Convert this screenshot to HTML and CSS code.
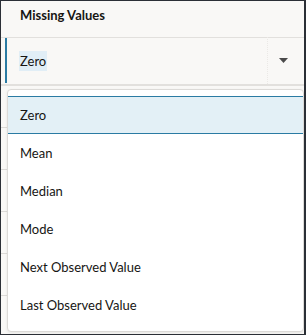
FILE: index.html
```html
<!DOCTYPE html>
<html lang="en">
<head>
    <meta charset="UTF-8">
    <meta name="viewport" content="width=device-width, initial-scale=1.0">
    <title>Missing Values</title>
    <link rel="stylesheet" href="styles.css">
</head>
<body>
    <div class="frame">
        <div class="field-label">Missing Values</div>

        <!-- Select field -->
        <div class="select-row">
            <div class="select-field">
                <span class="select-value">Zero</span>
                <span class="select-arrow">
                    <svg width="9" height="5" viewBox="0 0 9 5"><path d="M0 0h9L4.5 5z" fill="#4a4a4a"/></svg>
                </span>
            </div>
        </div>

        <!-- Table rows behind the popup -->
        <div class="rows">
            <div class="row"></div>
            <div class="row"></div>
            <div class="row"></div>
            <div class="row"></div>
            <div class="row"></div>
        </div>

        <!-- Dropdown list -->
        <ul class="dropdown">
            <li class="option selected">Zero</li>
            <li class="option">Mean</li>
            <li class="option">Median</li>
            <li class="option">Mode</li>
            <li class="option">Next Observed Value</li>
            <li class="option">Last Observed Value</li>
        </ul>
    </div>
</body>
</html>
```

FILE: styles.css
```css
/* Base */
* {
    box-sizing: border-box;
}

body {
    margin: 0;
    font-family: Lato, "Noto Sans", sans-serif;
    color: #161513;
}

.frame {
    position: relative;
    width: 306px;
    height: 335px;
    background: #f9f8f6;
    border: 1px solid #2b2f36;
    border-right-width: 2px;
    overflow: hidden;
}

/* Label */
.field-label {
    height: 37px;
    padding: 0 0 0 19px;
    border-bottom: 1px solid #e2e0dd;
    font-size: 13px;
    font-weight: bold;
    line-height: 29px;
}

/* Select */
.select-row {
    height: 48px;
    border-bottom: 2px solid #e2e0dd;
    padding-bottom: 1px;
}

.select-field {
    display: flex;
    align-items: center;
    height: 45px;
    margin-left: 4px;
    border-left: 2px solid #2a7ba3;
}

.select-value {
    margin-left: 12px;
    padding: 2px 1px;
    background: #e1eef6;
    font-size: 13px;
}

.select-arrow {
    display: flex;
    align-items: center;
    justify-content: center;
    margin-left: auto;
    width: 37px;
    height: 47px;
    padding-right: 6px;
    border-left: 1px dotted #ebe9e6;
}

/* Rows behind the popup */
.row {
    height: 42px;
    border-bottom: 1px solid #dcdad7;
}

/* Dropdown */
.dropdown {
    position: absolute;
    top: 88px;
    left: 6px;
    width: 297px;
    margin: 0;
    padding: 6px 0 7px;
    list-style: none;
    background: #fff;
    border: 1px solid #dcdad7;
    border-radius: 4px;
    box-shadow: 0 1px 3px rgba(0, 0, 0, 0.08);
}

.option {
    height: 38px;
    padding-left: 12px;
    font-size: 13px;
    line-height: 38px;
}

.option.selected {
    background: #e3f0f6;
    border-top: 1px solid #2a7ba3;
    border-bottom: 1px solid #2a7ba3;
    line-height: 36px;
}
```
